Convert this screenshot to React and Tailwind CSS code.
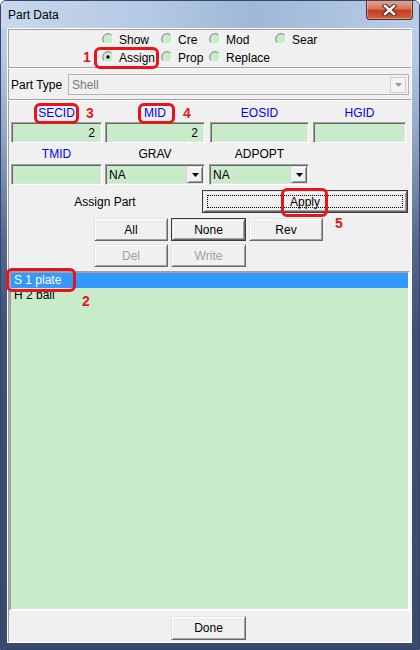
import React from "react";

// classic win32 3D edges
const raised =
  "border border-t-[#e3e3e3] border-l-[#e3e3e3] border-r-[#696969] border-b-[#696969] shadow-[inset_1px_1px_0_#ffffff,inset_-1px_-1px_0_#a0a0a0] bg-[#f0f0f0]";
const sunken =
  "border border-t-[#a0a0a0] border-l-[#a0a0a0] border-r-white border-b-white shadow-[inset_1px_1px_0_#696969,inset_-1px_-1px_0_#e3e3e3]";

function Radio({ checked }) {
  return (
    <svg width="12" height="12" viewBox="0 0 12 12" className="shrink-0">
      <circle cx="6" cy="6" r="5.3" fill="#c8ecca" />
      <path d="M2.25 9.75 A5.3 5.3 0 0 1 9.75 2.25" stroke="#7c7c7c" strokeWidth="1" fill="none" />
      <path d="M9.75 2.25 A5.3 5.3 0 0 1 2.25 9.75" stroke="#ffffff" strokeWidth="1" fill="none" />
      {checked && <circle cx="6" cy="6" r="1.7" fill="#000" />}
    </svg>
  );
}

function RadioItem({ label, checked }) {
  return (
    <div className="flex items-start h-[18px]">
      <div className="mt-[2px]">
        <Radio checked={checked} />
      </div>
      <span className="ml-[5px] leading-[18px]">{label}</span>
    </div>
  );
}

function Arrow({ color = "#000" }) {
  return (
    <svg width="7" height="4" viewBox="0 0 7 4">
      <path d="M0 0 H7 L3.5 4 Z" fill={color} />
    </svg>
  );
}

function Field({ value, className = "" }) {
  return (
    <div className={`h-[21px] bg-[#c8ecca] ${sunken} flex items-center justify-end pr-[6px] ${className}`}>
      {value}
    </div>
  );
}

function Combo({ value, className = "" }) {
  return (
    <div className={`h-[21px] bg-[#c8ecca] ${sunken} flex items-center pl-[3px] pr-[1px] ${className}`}>
      <span className="flex-1">{value}</span>
      <div className={`w-[16px] h-[17px] ${raised} flex items-center justify-center`}>
        <Arrow />
      </div>
    </div>
  );
}

function Btn({ children, className = "", disabled, def }) {
  const inner = (
    <div
      className={`h-full w-full ${raised} flex items-center justify-center ${
        disabled ? "text-[#a0a0a0]" : "text-black"
      }`}
    >
      {children}
    </div>
  );
  if (def) {
    return <div className={`border border-[#3c3c3c] ${className}`}>{inner}</div>;
  }
  return <div className={className}>{inner}</div>;
}

function RedBox({ className }) {
  return <div className={`absolute border-[3px] border-[#e8141c] rounded-[6px] ${className}`} />;
}

function RedNum({ n, className }) {
  return (
    <div className={`absolute text-[14px] font-bold leading-none text-[#e8141c] ${className}`}>{n}</div>
  );
}

function Separator() {
  return (
    <div>
      <div className="h-px bg-[#a0a0a0]" />
      <div className="h-px bg-white" />
    </div>
  );
}

export default function App() {
  return (
    <div className="relative w-[420px] h-[650px] font-['Liberation_Sans',Arial,sans-serif] text-[12px] text-black rounded-t-[6px] border border-[#36466a] bg-[linear-gradient(180deg,#c3d6ec_0px,#b2c7e1_60px,#8ea2c4_140px,#56688f_240px,#3f4f75_330px,#3a4a6e_650px)] flex flex-col pl-[6px] pr-[7px] pb-[6px] overflow-hidden">
      {/* title bar */}
      <div className="h-[27px] flex items-center -mr-[7px] bg-[linear-gradient(90deg,#c7d8ed_0%,#b4c9e3_35%,#9fb8d8_60%,#b9cde6_100%)] -ml-[6px] pl-[7px]">
        <span className="self-center">Part Data</span>
        <div className="ml-auto mr-[6px] self-start -mt-px w-[47px] h-[20px] rounded-b-[4px] border border-[#5b2a20] border-t-0 bg-[linear-gradient(180deg,#e7a898_0%,#d5775f_45%,#c23f24_55%,#d2603c_100%)] flex items-center justify-center shadow-[inset_0_0_0_1px_rgba(255,255,255,0.35)]">
          <svg width="15" height="12" viewBox="0 0 15 12">
            <path d="M3 2 L12 10 M12 2 L3 10" stroke="#4a1a12" strokeWidth="4.4" strokeLinecap="square" />
            <path d="M3 2 L12 10 M12 2 L3 10" stroke="#ffffff" strokeWidth="2.6" strokeLinecap="square" />
          </svg>
        </div>
      </div>

      {/* client area */}
      <div className="h-[615px] w-[405px] bg-[#f0f0f0] border border-white shadow-[inset_1px_1px_0_#a0a0a0] flex flex-col">
        {/* mode radios */}
        <div className="pt-[2px] pl-[94px] h-[38px]">
          <div className="grid grid-cols-[59px_48px_66px_auto]">
            <RadioItem label="Show" />
            <RadioItem label="Cre" />
            <RadioItem label="Mod" />
            <RadioItem label="Sear" />
            <RadioItem label="Assign" checked />
            <RadioItem label="Prop" />
            <RadioItem label="Replace" />
          </div>
        </div>
        <Separator />

        {/* part type */}
        <div className="flex items-center pt-[5px] pb-[4px] pl-[3px] pr-[2px]">
          <span>Part Type</span>
          <div className="ml-auto w-[341px] h-[21px] border border-[#b4b4b4] bg-[#f0f0f0] flex items-center pl-[3px] pr-[2px]">
            <span className="flex-1 text-[#7a7a7a]">Shell</span>
            <div className="w-[16px] h-[16px] border border-[#d0d0d0] bg-[#f4f4f4] flex items-center justify-center">
              <Arrow color="#9a9a9a" />
            </div>
          </div>
        </div>
        <Separator />

        {/* ids */}
        <div className="flex pl-[3px] h-[21px] items-end pb-[3px] leading-none">
          <div className="w-[91px] text-center text-[#0000ff]">SECID</div>
          <div className="ml-[3px] w-[100px] text-center text-[#0000ff]">MID</div>
          <div className="ml-[5px] w-[99px] text-center text-[#0000ff]">EOSID</div>
          <div className="ml-[4px] w-[93px] text-center text-[#0000ff]">HGID</div>
        </div>
        <div className="flex pl-[3px]">
          <Field value="2" className="w-[91px]" />
          <Field value="2" className="ml-[3px] w-[100px]" />
          <Field className="ml-[5px] w-[99px]" />
          <Field className="ml-[4px] w-[93px]" />
        </div>
        <div className="flex pl-[3px] h-[21px] items-end pb-[4px] leading-none">
          <div className="w-[91px] text-center text-[#0000ff]">TMID</div>
          <div className="ml-[3px] w-[100px] text-center">GRAV</div>
          <div className="ml-[5px] w-[99px] text-center">ADPOPT</div>
        </div>
        <div className="flex pl-[3px]">
          <Field className="w-[91px]" />
          <Combo value="NA" className="ml-[3px] w-[100px]" />
          <Combo value="NA" className="ml-[4px] w-[100px]" />
        </div>

        {/* assign part */}
        <div className="flex mt-[5px] h-[23px]">
          <div className="w-[194px] flex items-center justify-center">Assign Part</div>
          <div className="w-[206px] border border-[#3c3c3c]">
            <div className={`h-full ${raised} p-[3px]`}>
              <div className="h-full border border-dotted border-black flex items-center justify-center">
                Apply
              </div>
            </div>
          </div>
        </div>

        {/* selection buttons */}
        <div className="flex gap-[3px] pl-[86px] mt-[5px] h-[23px]">
          <Btn className="w-[74px]">All</Btn>
          <Btn className="w-[75px]" def>None</Btn>
          <Btn className="w-[74px]">Rev</Btn>
        </div>
        <div className="flex gap-[3px] pl-[86px] mt-[3px] h-[23px]">
          <Btn className="w-[74px]" disabled>Del</Btn>
          <Btn className="w-[75px]" disabled>Write</Btn>
        </div>

        {/* part list */}
        <div className="mt-[4px] mx-[1px] h-[340px] bg-[#c8ecca] border-2 border-t-[#a0a0a0] border-l-[#a0a0a0] border-r-white border-b-white">
          <div className="h-[15px] bg-[#3399ff] text-white pl-[3px] leading-[15px]">S 1 plate</div>
          <div className="h-[15px] pl-[3px] leading-[15px]">H 2 ball</div>
        </div>

        {/* done */}
        <div className="flex pl-[163px] mt-[5px]">
          <Btn className="w-[75px] h-[24px]">Done</Btn>
        </div>
      </div>

      {/* annotations */}
      <RedBox className="left-[93px] top-[46px] w-[65px] h-[22px]" />
      <RedNum n="1" className="left-[82px] top-[49px]" />
      <RedBox className="left-[33px] top-[102px] w-[45px] h-[21px]" />
      <RedNum n="3" className="left-[85px] top-[105px]" />
      <RedBox className="left-[137px] top-[102px] w-[37px] h-[21px]" />
      <RedNum n="4" className="left-[182px] top-[105px]" />
      <RedBox className="left-[280px] top-[187px] w-[47px] h-[29px]" />
      <RedNum n="5" className="left-[334px] top-[215px]" />
      <RedBox className="left-[5px] top-[267px] w-[70px] h-[24px]" />
      <RedNum n="2" className="left-[81px] top-[293px]" />
    </div>
  );
}
